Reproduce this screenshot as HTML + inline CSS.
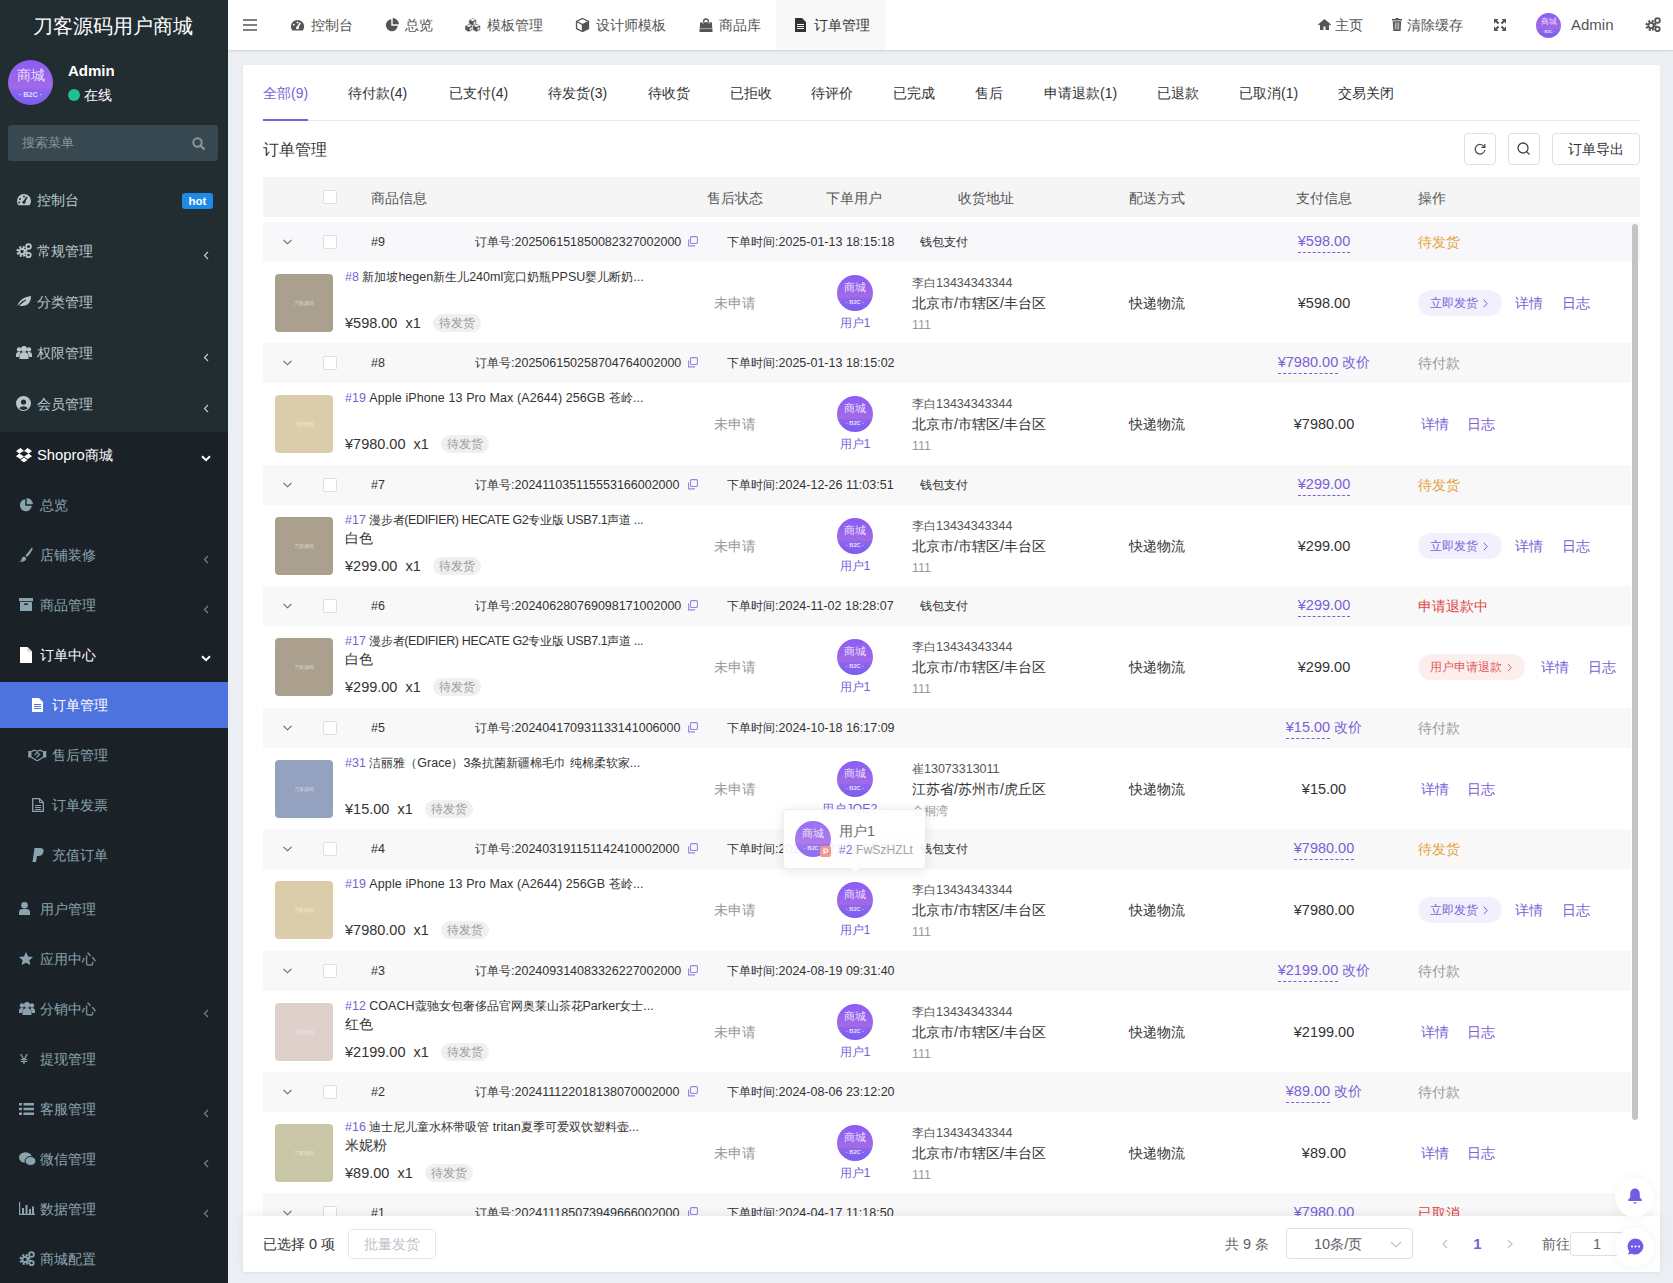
<!DOCTYPE html><html><head><meta charset="utf-8"><style>
*{margin:0;padding:0;box-sizing:border-box}
html,body{width:1673px;height:1283px;overflow:hidden;background:#ebeff4;font-family:"Liberation Sans", sans-serif}
.t{position:absolute;white-space:nowrap}
.b{position:absolute}
svg{position:absolute;overflow:visible}
</style></head><body>
<div class="b" style="left:0px;top:0px;width:228px;height:1283px;background:#222d32"></div>
<div class="b" style="left:0px;top:432px;width:228px;height:851px;background:#1b2227"></div>
<div class="t" style="left:-187px;width:600px;text-align:center;top:11.0px;font-size:20px;line-height:30px;color:#fff;font-weight:normal;">刀客源码用户商城</div>
<div class="b" style="left:8.0px;top:60.0px;width:45px;height:45px;border-radius:50%;background:linear-gradient(180deg,#8b5cf6 0%,#a36ae6 62%,#8f66ec 64%,#7c5cf0 100%);overflow:hidden"><div style="position:absolute;left:0;width:100%;top:8.1px;text-align:center;color:rgba(255,255,255,.8);font-size:13.5px;line-height:16.2px">商城</div><div style="position:absolute;left:0;width:100%;top:30.6px;text-align:center;color:rgba(255,255,255,.8);font-size:7.2px;line-height:8.64px;font-weight:bold">· B2C ·</div></div>
<div class="t" style="left:68px;top:61.0px;font-size:15px;line-height:20px;color:#fff;font-weight:bold;">Admin</div>
<div class="b" style="left:68px;top:89px;width:12px;height:12px;border-radius:50%;background:#1fbf8f"></div>
<div class="t" style="left:84px;top:85.0px;font-size:14px;line-height:20px;color:#fff;font-weight:normal;">在线</div>
<div class="b" style="left:8px;top:125px;width:210px;height:36px;background:#374850;border-radius:3px"></div>
<div class="t" style="left:22px;top:133.0px;font-size:13px;line-height:20px;color:#8a9499;font-weight:normal;">搜索菜单</div>
<svg style="left:192px;top:137px" width="13" height="13" viewBox="0 0 13 13"><circle cx="5.5" cy="5.5" r="4.2" fill="none" stroke="#8a9499" stroke-width="2"/><path d="M8.6 8.6L12 12" stroke="#8a9499" stroke-width="2.2" stroke-linecap="round"/></svg>
<svg style="left:16px;top:193px" width="16" height="13" viewBox="0 0 16 13"><path d="M8 1A7 7 0 0 0 1 8c0 1.6.5 3 1.4 4.2h11.2A7 7 0 0 0 15 8 7 7 0 0 0 8 1z" fill="#b8c7ce"/><path d="M8 9L11 4" stroke="#222d32" stroke-width="1.6"/><circle cx="8" cy="9.2" r="1.6" fill="#222d32"/><circle cx="4" cy="6" r="1" fill="#222d32"/><circle cx="8" cy="3.6" r="1" fill="#222d32"/><circle cx="3.2" cy="9.5" r="1" fill="#222d32"/></svg>
<div class="t" style="left:37px;top:190.0px;font-size:14px;line-height:20px;color:#b8c7ce;font-weight:normal;">控制台</div>
<svg style="left:16px;top:243px" width="16" height="15" viewBox="0 0 16 15"><circle cx="6" cy="8.5" r="4.3" fill="none" stroke="#b8c7ce" stroke-width="2.6" stroke-dasharray="2 1.4"/><circle cx="6" cy="8.5" r="2.6" fill="none" stroke="#b8c7ce" stroke-width="1.8"/><circle cx="12.5" cy="3.5" r="2.4" fill="none" stroke="#b8c7ce" stroke-width="1.8"/><circle cx="12.5" cy="12" r="2.2" fill="none" stroke="#b8c7ce" stroke-width="1.8"/></svg>
<div class="t" style="left:37px;top:241.0px;font-size:14px;line-height:20px;color:#b8c7ce;font-weight:normal;">常规管理</div>
<svg style="left:203px;top:251px" width="6" height="9" viewBox="0 0 6 9"><path d="M5 1L1.5 4.5L5 8" fill="none" stroke="#c0ccd2" stroke-width="1.2"/></svg>
<svg style="left:16px;top:295px" width="16" height="13" viewBox="0 0 16 13"><path d="M1 12C3 5 8 2 15 1c0 6-3 10-9 10-2 0-3-.5-4-1" fill="#b8c7ce"/><path d="M1.5 12C4 8 7 6 10 5" stroke="#222d32" stroke-width="1"/></svg>
<div class="t" style="left:37px;top:292.0px;font-size:14px;line-height:20px;color:#b8c7ce;font-weight:normal;">分类管理</div>
<svg style="left:16px;top:345px" width="16" height="14" viewBox="0 0 16 14"><circle cx="8" cy="4" r="3" fill="#b8c7ce"/><circle cx="3" cy="4.5" r="2.2" fill="#b8c7ce"/><circle cx="13" cy="4.5" r="2.2" fill="#b8c7ce"/><path d="M3.5 14v-3a4.5 4 0 0 1 9 0v3z" fill="#b8c7ce"/><path d="M0 12v-2a3 3 0 0 1 3-3h1.5L3 12z" fill="#b8c7ce"/><path d="M16 12v-2a3 3 0 0 0-3-3h-1.5L13 12z" fill="#b8c7ce"/></svg>
<div class="t" style="left:37px;top:343.0px;font-size:14px;line-height:20px;color:#b8c7ce;font-weight:normal;">权限管理</div>
<svg style="left:203px;top:353px" width="6" height="9" viewBox="0 0 6 9"><path d="M5 1L1.5 4.5L5 8" fill="none" stroke="#c0ccd2" stroke-width="1.2"/></svg>
<svg style="left:16px;top:396px" width="15" height="15" viewBox="0 0 15 15"><circle cx="7.5" cy="7.5" r="7.5" fill="#b8c7ce"/><circle cx="7.5" cy="6" r="2.6" fill="#222d32"/><path d="M3.2 12.2a5 4 0 0 1 8.6 0A6 6 0 0 1 3.2 12.2z" fill="#222d32"/></svg>
<div class="t" style="left:37px;top:394.0px;font-size:14px;line-height:20px;color:#b8c7ce;font-weight:normal;">会员管理</div>
<svg style="left:203px;top:404px" width="6" height="9" viewBox="0 0 6 9"><path d="M5 1L1.5 4.5L5 8" fill="none" stroke="#c0ccd2" stroke-width="1.2"/></svg>
<div class="b" style="left:182px;top:193px;width:31px;height:16px;background:#1e8ae6;border-radius:3px"></div>
<div class="t" style="left:-102.5px;width:600px;text-align:center;top:193.0px;font-size:11.5px;line-height:16px;color:#fff;font-weight:bold;">hot</div>
<svg style="left:16px;top:448px" width="16" height="14" viewBox="0 0 16 14"><path d="M4.5 0L0 3l3.3 2.6L8 3zM11.5 0L16 3l-3.3 2.6L8 3zM0 8.3L4.5 11.3 8 8.5 3.3 5.6zM16 8.3L11.5 11.3 8 8.5 12.7 5.6zM4.6 12.2L8 14.3l3.4-2.1L8 9.6z" fill="#fff"/></svg>
<div class="t" style="left:37px;top:445.0px;font-size:14.8px;line-height:20px;color:#fff;font-weight:normal;">Shopro<span style="font-size:14px">商城</span></div>
<svg style="left:201px;top:455px" width="10" height="7" viewBox="0 0 10 7"><path d="M1 1.2L5 5.2L9 1.2" fill="none" stroke="#fff" stroke-width="2"/></svg>
<svg style="left:19px;top:498px" width="14" height="14" viewBox="0 0 14 14"><path d="M6.3 1.2A6 6 0 1 0 12.8 7.7H6.3z" fill="#8aa4af"/><path d="M7.7 0v6.3H14A6.5 6.5 0 0 0 7.7 0z" fill="#8aa4af"/></svg>
<div class="t" style="left:40px;top:495.0px;font-size:14px;line-height:20px;color:#8aa4af;font-weight:normal;">总览</div>
<svg style="left:19px;top:547px" width="14" height="15" viewBox="0 0 14 15"><path d="M13 0.5C11 3 8 6.5 6.5 8.5l1.5 1.5C10 8 13.2 4 13.8 1.2z" fill="#8aa4af"/><path d="M5.5 9.5c-2 0-3 1.5-3 3 0 1-1 1.5-2.5 1.8C3 15.5 7.5 14.5 7 11z" fill="#8aa4af"/></svg>
<div class="t" style="left:40px;top:545.0px;font-size:14px;line-height:20px;color:#8aa4af;font-weight:normal;">店铺装修</div>
<svg style="left:203px;top:555px" width="6" height="9" viewBox="0 0 6 9"><path d="M5 1L1.5 4.5L5 8" fill="none" stroke="#6d8590" stroke-width="1.2"/></svg>
<svg style="left:19px;top:598px" width="14" height="13" viewBox="0 0 14 13"><rect x="0" y="0" width="14" height="3.2" fill="#8aa4af"/><path d="M1 4h12v9H1z" fill="#8aa4af"/><rect x="5" y="5.5" width="4" height="1.4" fill="#1a2226"/></svg>
<div class="t" style="left:40px;top:595.0px;font-size:14px;line-height:20px;color:#8aa4af;font-weight:normal;">商品管理</div>
<svg style="left:203px;top:605px" width="6" height="9" viewBox="0 0 6 9"><path d="M5 1L1.5 4.5L5 8" fill="none" stroke="#6d8590" stroke-width="1.2"/></svg>
<svg style="left:20px;top:647px" width="12" height="16" viewBox="0 0 12 16"><path d="M0 0h7.5L12 4.5V16H0z" fill="#fff"/><path d="M7.5 0v4.5H12" fill="#c9d3d8"/></svg>
<div class="t" style="left:40px;top:645.0px;font-size:14px;line-height:20px;color:#fff;font-weight:normal;">订单中心</div>
<svg style="left:201px;top:655px" width="10" height="7" viewBox="0 0 10 7"><path d="M1 1.2L5 5.2L9 1.2" fill="none" stroke="#fff" stroke-width="2"/></svg>
<div class="b" style="left:0px;top:682px;width:228px;height:46px;background:#4e73df"></div>
<svg style="left:32px;top:698px" width="11" height="14" viewBox="0 0 11 14"><path d="M0 0h7l4 4v10H0z" fill="#fff"/><path d="M2 6.5h7M2 8.5h7M2 10.5h7" stroke="#4e73df" stroke-width="1"/></svg>
<div class="t" style="left:52px;top:695.0px;font-size:14px;line-height:20px;color:#fff;font-weight:normal;">订单管理</div>
<svg style="left:28px;top:749px" width="18.5" height="12" viewBox="0 0 18 12"><rect x="0" y="2" width="2.6" height="6.5" fill="#8aa4af"/><rect x="15.4" y="2" width="2.6" height="6.5" fill="#8aa4af"/><path d="M2.6 3L6 1.2 9 2.2 12 1.2 15.4 3V8L10 11.3Q9 11.9 8 11.2L2.6 8z" fill="none" stroke="#8aa4af" stroke-width="1.2"/><path d="M6.3 6.2L9 3.4 11.8 6.2M8.2 8.6L10.6 6.2" fill="none" stroke="#8aa4af" stroke-width="1.2"/></svg>
<div class="t" style="left:52px;top:745.0px;font-size:14px;line-height:20px;color:#8aa4af;font-weight:normal;">售后管理</div>
<svg style="left:32px;top:798px" width="12" height="14" viewBox="0 0 12 14"><path d="M.7 .7H7.5L11.3 4.5V13.3H.7z" fill="none" stroke="#8aa4af" stroke-width="1.3"/><path d="M7.5 .7V4.5H11.3" fill="none" stroke="#8aa4af" stroke-width="1"/><path d="M3 7.5H9M3 9.5H9M3 11.5H9" stroke="#8aa4af" stroke-width="1"/></svg>
<div class="t" style="left:52px;top:795.0px;font-size:14px;line-height:20px;color:#8aa4af;font-weight:normal;">订单发票</div>
<svg style="left:32px;top:848px" width="12" height="14" viewBox="0 0 12 14"><path d="M2.5 0H8c2.5 0 4 1.3 3.5 3.8C11 7 9 8 6.5 8H5l-1 6H.5z" fill="#8aa4af"/></svg>
<div class="t" style="left:52px;top:845.0px;font-size:14px;line-height:20px;color:#8aa4af;font-weight:normal;">充值订单</div>
<svg style="left:19px;top:902px" width="11" height="13" viewBox="0 0 11 13"><circle cx="5.5" cy="3.3" r="3.3" fill="#8aa4af"/><path d="M0 13v-2.5A3.5 3.5 0 0 1 3.5 7h4A3.5 3.5 0 0 1 11 10.5V13z" fill="#8aa4af"/></svg>
<div class="t" style="left:40px;top:899.0px;font-size:14px;line-height:20px;color:#8aa4af;font-weight:normal;">用户管理</div>
<svg style="left:19px;top:952px" width="14" height="13" viewBox="0 0 14 13"><path d="M7 0l2.1 4.4 4.9.6-3.6 3.3.9 4.7L7 10.7 2.7 13l.9-4.7L0 5l4.9-.6z" fill="#8aa4af"/></svg>
<div class="t" style="left:40px;top:949.0px;font-size:14px;line-height:20px;color:#8aa4af;font-weight:normal;">应用中心</div>
<svg style="left:19px;top:1001px" width="16" height="14" viewBox="0 0 16 14"><circle cx="8" cy="4" r="3" fill="#8aa4af"/><circle cx="3" cy="4.5" r="2.2" fill="#8aa4af"/><circle cx="13" cy="4.5" r="2.2" fill="#8aa4af"/><path d="M3.5 14v-3a4.5 4 0 0 1 9 0v3z" fill="#8aa4af"/><path d="M0 12v-2a3 3 0 0 1 3-3h1.5L3 12z" fill="#8aa4af"/><path d="M16 12v-2a3 3 0 0 0-3-3h-1.5L13 12z" fill="#8aa4af"/></svg>
<div class="t" style="left:40px;top:999.0px;font-size:14px;line-height:20px;color:#8aa4af;font-weight:normal;">分销中心</div>
<svg style="left:203px;top:1009px" width="6" height="9" viewBox="0 0 6 9"><path d="M5 1L1.5 4.5L5 8" fill="none" stroke="#6d8590" stroke-width="1.2"/></svg>
<div class="t" style="left:20px;top:1050px;font-size:14px;line-height:18px;color:#8aa4af">¥</div>
<div class="t" style="left:40px;top:1049.0px;font-size:14px;line-height:20px;color:#8aa4af;font-weight:normal;">提现管理</div>
<svg style="left:19px;top:1103px" width="15" height="12" viewBox="0 0 15 12"><path d="M0 0h3v2.4H0zM4.5 0H15v2.4H4.5zM0 4.8h3v2.4H0zM4.5 4.8H15v2.4H4.5zM0 9.6h3V12H0zM4.5 9.6H15V12H4.5z" fill="#8aa4af"/></svg>
<div class="t" style="left:40px;top:1099.0px;font-size:14px;line-height:20px;color:#8aa4af;font-weight:normal;">客服管理</div>
<svg style="left:203px;top:1109px" width="6" height="9" viewBox="0 0 6 9"><path d="M5 1L1.5 4.5L5 8" fill="none" stroke="#6d8590" stroke-width="1.2"/></svg>
<svg style="left:19px;top:1152px" width="17" height="14" viewBox="0 0 17 14"><ellipse cx="6.5" cy="5.5" rx="6.5" ry="5.2" fill="#8aa4af"/><ellipse cx="11.5" cy="9" rx="5.5" ry="4.5" fill="#8aa4af" stroke="#1a2226" stroke-width="1"/></svg>
<div class="t" style="left:40px;top:1149.0px;font-size:14px;line-height:20px;color:#8aa4af;font-weight:normal;">微信管理</div>
<svg style="left:203px;top:1159px" width="6" height="9" viewBox="0 0 6 9"><path d="M5 1L1.5 4.5L5 8" fill="none" stroke="#6d8590" stroke-width="1.2"/></svg>
<svg style="left:19px;top:1202px" width="16" height="13" viewBox="0 0 16 13"><path d="M.6 0v12.4H16" fill="none" stroke="#8aa4af" stroke-width="1.2"/><path d="M3 6h2v6H3zM6.5 3h2v9h-2zM10 7h2v5h-2zM13 4.5h2V12h-2z" fill="#8aa4af"/></svg>
<div class="t" style="left:40px;top:1199.0px;font-size:14px;line-height:20px;color:#8aa4af;font-weight:normal;">数据管理</div>
<svg style="left:203px;top:1209px" width="6" height="9" viewBox="0 0 6 9"><path d="M5 1L1.5 4.5L5 8" fill="none" stroke="#6d8590" stroke-width="1.2"/></svg>
<svg style="left:19px;top:1251px" width="16" height="15" viewBox="0 0 16 15"><circle cx="6" cy="8.5" r="4.3" fill="none" stroke="#8aa4af" stroke-width="2.6" stroke-dasharray="2 1.4"/><circle cx="6" cy="8.5" r="2.6" fill="none" stroke="#8aa4af" stroke-width="1.8"/><circle cx="12.5" cy="3.5" r="2.4" fill="none" stroke="#8aa4af" stroke-width="1.8"/><circle cx="12.5" cy="12" r="2.2" fill="none" stroke="#8aa4af" stroke-width="1.8"/></svg>
<div class="t" style="left:40px;top:1249.0px;font-size:14px;line-height:20px;color:#8aa4af;font-weight:normal;">商城配置</div>
<div class="b" style="left:228px;top:0px;width:1445px;height:51px;background:#fff;border-bottom:1px solid #d6d9dd;box-shadow:0 1px 2px rgba(0,0,0,.05)"></div>
<svg style="left:243px;top:19px" width="14" height="12" viewBox="0 0 14 12"><path d="M0 1h14M0 6h14M0 11h14" stroke="#555" stroke-width="1.7"/></svg>
<div class="b" style="left:776px;top:0px;width:109px;height:50px;background:#f8f8f8"></div>
<svg style="left:290px;top:19px" width="15" height="12.2" viewBox="0 0 16 13"><path d="M8 1A7 7 0 0 0 1 8c0 1.6.5 3 1.4 4.2h11.2A7 7 0 0 0 15 8 7 7 0 0 0 8 1z" fill="#555"/><path d="M8 9L11 4" stroke="#fff" stroke-width="1.6"/><circle cx="8" cy="9.2" r="1.6" fill="#fff"/><circle cx="4" cy="6" r="1" fill="#fff"/><circle cx="8" cy="3.6" r="1" fill="#fff"/></svg>
<div class="t" style="left:311px;top:15.0px;font-size:14px;line-height:20px;color:#555;font-weight:normal;">控制台</div>
<svg style="left:385px;top:18px" width="14" height="14" viewBox="0 0 14 14"><path d="M6.3 1.2A6 6 0 1 0 12.8 7.7H6.3z" fill="#555"/><path d="M7.7 0v6.3H14A6.5 6.5 0 0 0 7.7 0z" fill="#555"/></svg>
<div class="t" style="left:405px;top:15.0px;font-size:14px;line-height:20px;color:#555;font-weight:normal;">总览</div>
<svg style="left:464px;top:18px" width="17.4" height="14" viewBox="0 0 17 14.5"><path d="M4.5 2L8.5 0L12.5 2V6.5L8.5 8.5L4.5 6.5z" fill="#555" stroke="#fff" stroke-width=".6"/><path d="M5.7 2L8.5 0.9L11.3 2L8.5 3.3z" fill="#fff"/><path d="M9.4 4.3L11.5 3.3V5.9L9.4 6.9z" fill="#fff" opacity=".85"/><path d="M0.5 8L4.5 6L8.5 8V12.5L4.5 14.5L0.5 12.5z" fill="#555" stroke="#fff" stroke-width=".6"/><path d="M1.7000000000000002 8L4.5 6.9L7.3 8L4.5 9.3z" fill="#fff"/><path d="M5.4 10.3L7.5 9.3V11.9L5.4 12.9z" fill="#fff" opacity=".85"/><path d="M8.5 8L12.5 6L16.5 8V12.5L12.5 14.5L8.5 12.5z" fill="#555" stroke="#fff" stroke-width=".6"/><path d="M9.7 8L12.5 6.9L15.3 8L12.5 9.3z" fill="#fff"/><path d="M13.4 10.3L15.5 9.3V11.9L13.4 12.9z" fill="#fff" opacity=".85"/></svg>
<div class="t" style="left:487px;top:15.0px;font-size:14px;line-height:20px;color:#555;font-weight:normal;">模板管理</div>
<svg style="left:576px;top:18px" width="13" height="14" viewBox="0 0 13 14"><path d="M6.5 .5L12.5 3.5v7L6.5 13.5.5 10.5v-7z" fill="none" stroke="#555" stroke-width="1.3"/><path d="M.5 3.5L6.5 6.5 12.5 3.5M6.5 6.5v7" fill="none" stroke="#555" stroke-width="1.3"/><path d="M6.5 6.5L12.5 3.5v7L6.5 13.5z" fill="#555"/></svg>
<div class="t" style="left:596px;top:15.0px;font-size:14px;line-height:20px;color:#555;font-weight:normal;">设计师模板</div>
<svg style="left:699px;top:18px" width="14" height="14" viewBox="0 0 14 14"><path d="M4.6 5.2V3.4a2.4 2.4 0 0 1 4.8 0v1.8" fill="none" stroke="#555" stroke-width="1.3"/><path d="M1.2 4.2h11.6l.8 9.8H.4z" fill="#555"/><path d="M4 4.2v1.3M10 4.2v1.3" stroke="#fff" stroke-width="1"/><path d="M.6 10.6h12.8" stroke="#fff" stroke-width=".8" opacity=".6"/></svg>
<div class="t" style="left:719px;top:15.0px;font-size:14px;line-height:20px;color:#555;font-weight:normal;">商品库</div>
<svg style="left:795px;top:18px" width="11" height="14" viewBox="0 0 11 14"><path d="M0 0h7l4 4v10H0z" fill="#333"/><path d="M2 6.5h7M2 8.5h7M2 10.5h7" stroke="#f6f6f6" stroke-width="1"/></svg>
<div class="t" style="left:814px;top:15.0px;font-size:14px;line-height:20px;color:#333;font-weight:normal;">订单管理</div>
<svg style="left:1318px;top:19px" width="13" height="11" viewBox="0 0 13 11"><path d="M6.5 0L0 5.6l.8.9 1.2-1V11h3.5V7.5h2V11H11V5.5l1.2 1 .8-.9z" fill="#555"/></svg>
<div class="t" style="left:1335px;top:15.0px;font-size:14px;line-height:20px;color:#555;font-weight:normal;">主页</div>
<svg style="left:1392px;top:18px" width="10" height="13" viewBox="0 0 10 13"><path d="M3.5 0h3v1H10v1.6H0V1h3.5z" fill="#555"/><path d="M.8 3.2h8.4L8.6 13H1.4z" fill="#555"/><path d="M3.3 4.5v7M5 4.5v7M6.7 4.5v7" stroke="#fff" stroke-width=".7"/></svg>
<div class="t" style="left:1407px;top:15.0px;font-size:14px;line-height:20px;color:#555;font-weight:normal;">清除缓存</div>
<svg style="left:1494px;top:19px" width="12" height="12" viewBox="0 0 12 12"><path d="M0 0h4.5L3 1.5 5.3 3.8 3.8 5.3 1.5 3 0 4.5zM12 0v4.5L10.5 3 8.2 5.3 6.7 3.8 9 1.5 7.5 0zM0 12V7.5L1.5 9l2.3-2.3 1.5 1.5L3 10.5 4.5 12zM12 12H7.5L9 10.5 6.7 8.2l1.5-1.5L10.5 9 12 7.5z" fill="#555"/></svg>
<div class="b" style="left:1536.0px;top:12.5px;width:25px;height:25px;border-radius:50%;background:linear-gradient(180deg,#8b5cf6 0%,#a36ae6 62%,#8f66ec 64%,#7c5cf0 100%);overflow:hidden"><div style="position:absolute;left:0;width:100%;top:4.5px;text-align:center;color:rgba(255,255,255,.8);font-size:7.5px;line-height:9.0px">商城</div><div style="position:absolute;left:0;width:100%;top:17.0px;text-align:center;color:rgba(255,255,255,.8);font-size:4.0px;line-height:4.8px;font-weight:bold">· B2C ·</div></div>
<div class="t" style="left:1571px;top:15.0px;font-size:15px;line-height:20px;color:#555;font-weight:normal;">Admin</div>
<svg style="left:1645px;top:17px" width="16" height="15" viewBox="0 0 16 15"><circle cx="6" cy="8.5" r="4.3" fill="none" stroke="#555" stroke-width="2.6" stroke-dasharray="2 1.4"/><circle cx="6" cy="8.5" r="2.6" fill="none" stroke="#555" stroke-width="1.8"/><circle cx="12.5" cy="3.5" r="2.4" fill="none" stroke="#555" stroke-width="1.8"/><circle cx="12.5" cy="12" r="2.2" fill="none" stroke="#555" stroke-width="1.8"/></svg>
<div class="b" style="left:243px;top:65px;width:1417px;height:1207px;background:#fff;border-radius:2px;box-shadow:0 1px 2px rgba(0,0,0,.04)"></div>
<div class="t" style="left:263px;top:83.0px;font-size:14px;line-height:20px;color:#7b5fd6;font-weight:normal;">全部(9)</div>
<div class="t" style="left:348px;top:83.0px;font-size:14px;line-height:20px;color:#333;font-weight:normal;">待付款(4)</div>
<div class="t" style="left:449px;top:83.0px;font-size:14px;line-height:20px;color:#333;font-weight:normal;">已支付(4)</div>
<div class="t" style="left:548px;top:83.0px;font-size:14px;line-height:20px;color:#333;font-weight:normal;">待发货(3)</div>
<div class="t" style="left:648px;top:83.0px;font-size:14px;line-height:20px;color:#333;font-weight:normal;">待收货</div>
<div class="t" style="left:730px;top:83.0px;font-size:14px;line-height:20px;color:#333;font-weight:normal;">已拒收</div>
<div class="t" style="left:811px;top:83.0px;font-size:14px;line-height:20px;color:#333;font-weight:normal;">待评价</div>
<div class="t" style="left:893px;top:83.0px;font-size:14px;line-height:20px;color:#333;font-weight:normal;">已完成</div>
<div class="t" style="left:975px;top:83.0px;font-size:14px;line-height:20px;color:#333;font-weight:normal;">售后</div>
<div class="t" style="left:1044px;top:83.0px;font-size:14px;line-height:20px;color:#333;font-weight:normal;">申请退款(1)</div>
<div class="t" style="left:1157px;top:83.0px;font-size:14px;line-height:20px;color:#333;font-weight:normal;">已退款</div>
<div class="t" style="left:1239px;top:83.0px;font-size:14px;line-height:20px;color:#333;font-weight:normal;">已取消(1)</div>
<div class="t" style="left:1338px;top:83.0px;font-size:14px;line-height:20px;color:#333;font-weight:normal;">交易关闭</div>
<div class="b" style="left:263px;top:119px;width:1377px;height:2px;background:#e8e8ec;height:1px;top:120px"></div>
<div class="b" style="left:263px;top:119px;width:45px;height:2px;background:#7b5fd6"></div>
<div class="t" style="left:263px;top:139.0px;font-size:16px;line-height:22px;color:#333;font-weight:normal;">订单管理</div>
<div class="b" style="left:1464px;top:133px;width:32px;height:32px;border:1px solid #dcdfe6;border-radius:4px;background:#fff"></div>
<div class="b" style="left:1508px;top:133px;width:32px;height:32px;border:1px solid #dcdfe6;border-radius:4px;background:#fff"></div>
<svg style="left:1474px;top:143px" width="12" height="12" viewBox="0 0 12 12"><path d="M10.3 4A4.8 4.8 0 1 0 10.8 7" fill="none" stroke="#444" stroke-width="1.2"/><path d="M10.8 1v3.4H7.4" fill="none" stroke="#444" stroke-width="1.2"/></svg>
<svg style="left:1517px;top:142px" width="14" height="14" viewBox="0 0 14 14"><circle cx="6" cy="6" r="5" fill="none" stroke="#444" stroke-width="1.3"/><path d="M9.6 9.6L12.5 12.5" stroke="#444" stroke-width="1.3"/></svg>
<div class="b" style="left:1552px;top:133px;width:88px;height:32px;border:1px solid #dcdfe6;border-radius:4px;background:#fff"></div>
<div class="t" style="left:1296px;width:600px;text-align:center;top:139.0px;font-size:14px;line-height:20px;color:#333;font-weight:normal;">订单导出</div>
<div class="b" style="left:263px;top:177px;width:1377px;height:40px;background:#f5f5f6"></div>
<div class="b" style="left:323px;top:190px;width:14px;height:14px;border:1px solid #dcdfe6;border-radius:2px;background:#fff"></div>
<div class="t" style="left:371px;top:188.0px;font-size:14px;line-height:20px;color:#555;font-weight:normal;">商品信息</div>
<div class="t" style="left:1418px;top:188.0px;font-size:14px;line-height:20px;color:#555;font-weight:normal;">操作</div>
<div class="t" style="left:435px;width:600px;text-align:center;top:188.0px;font-size:14px;line-height:20px;color:#555;font-weight:normal;">售后状态</div>
<div class="t" style="left:554px;width:600px;text-align:center;top:188.0px;font-size:14px;line-height:20px;color:#555;font-weight:normal;">下单用户</div>
<div class="t" style="left:686px;width:600px;text-align:center;top:188.0px;font-size:14px;line-height:20px;color:#555;font-weight:normal;">收货地址</div>
<div class="t" style="left:857px;width:600px;text-align:center;top:188.0px;font-size:14px;line-height:20px;color:#555;font-weight:normal;">配送方式</div>
<div class="t" style="left:1024px;width:600px;text-align:center;top:188.0px;font-size:14px;line-height:20px;color:#555;font-weight:normal;">支付信息</div>
<div style="position:absolute;left:0;top:0;width:1673px;height:1216px;overflow:hidden">
<div class="b" style="left:263px;top:222px;width:1377px;height:40px;background:#f8f7fa"></div>
<svg style="left:283px;top:239px" width="9" height="6" viewBox="0 0 9 6"><path d="M.5 .8L4.5 4.8 8.5 .8" fill="none" stroke="#666" stroke-width="1.1"/></svg>
<div class="b" style="left:323px;top:235px;width:14px;height:14px;border:1px solid #dcdfe6;border-radius:2px;background:#fff"></div>
<div class="t" style="left:371px;top:232.0px;font-size:12.5px;line-height:20px;color:#333;font-weight:normal;">#9</div>
<div class="t" style="left:475px;top:232.0px;font-size:12.5px;line-height:20px;color:#333;font-weight:normal;"><span style="font-size:12px">订单号</span>:202506151850082327002000</div>
<svg style="left:687px;top:236px" width="11" height="11" viewBox="0 0 11 11"><rect x="3.5" y=".6" width="6.9" height="6.9" rx="1" fill="none" stroke="#9b85e0" stroke-width="1.1"/><path d="M1.6 3.5v6.4h6.4" fill="none" stroke="#9b85e0" stroke-width="1.1"/></svg>
<div class="t" style="left:727px;top:232.0px;font-size:12.5px;line-height:20px;color:#333;font-weight:normal;"><span style="font-size:12px">下单时间</span>:2025-01-13 18:15:18</div>
<div class="t" style="left:920px;top:232.0px;font-size:12.5px;line-height:20px;color:#333;font-weight:normal;"><span style="font-size:12px">钱包支付</span></div>
<div class="t" style="left:1224px;width:200px;text-align:center;top:231px;font-size:14.5px;line-height:20px;color:#7b5fd6"><span style="border-bottom:1px dashed #7b5fd6;padding-bottom:3px">¥598.00</span></div>
<div class="t" style="left:1418px;top:232.0px;font-size:14px;line-height:20px;color:#e6a23c;font-weight:normal;">待发货</div>
<div class="b" style="left:275px;top:274px;width:58px;height:58px;background:#ab9f8d;border-radius:4px"></div>
<div class="t" style="left:4px;width:600px;text-align:center;top:299.0px;font-size:5px;line-height:8px;color:rgba(255,255,255,.6);font-weight:normal;">刀客源码</div>
<div class="t" style="left:345px;top:267px;font-size:12.5px;line-height:20px;color:#333"><span style="color:#7b5fd6">#8</span> <span style="letter-spacing:0px"><span style="font-size:12px">新加坡</span>hegen<span style="font-size:12px">新生儿</span>240ml<span style="font-size:12px">宽口奶瓶</span>PPSU<span style="font-size:12px">婴儿断奶</span>...</span></div>
<div class="t" id="pr9" style="left:345px;top:313px;font-size:14.5px;line-height:20px;color:#333">¥598.00&nbsp;&nbsp;x1<span style="display:inline-block;vertical-align:middle;margin-left:12px;margin-top:-3px;width:48px;height:18px;border-radius:9px;background:#f0f0f1;color:#999;font-size:12px;line-height:18px;text-align:center">待发货</span></div>
<div class="t" style="left:435px;width:600px;text-align:center;top:293.0px;font-size:14px;line-height:20px;color:#999;font-weight:normal;">未申请</div>
<div class="b" style="left:837.0px;top:275.0px;width:36px;height:36px;border-radius:50%;background:linear-gradient(180deg,#8b5cf6 0%,#a36ae6 62%,#8f66ec 64%,#7c5cf0 100%);overflow:hidden"><div style="position:absolute;left:0;width:100%;top:6.4799999999999995px;text-align:center;color:rgba(255,255,255,.8);font-size:10.799999999999999px;line-height:12.959999999999999px">商城</div><div style="position:absolute;left:0;width:100%;top:24.48px;text-align:center;color:rgba(255,255,255,.8);font-size:5.76px;line-height:6.912px;font-weight:bold">· B2C ·</div></div>
<div class="t" style="left:555px;width:600px;text-align:center;top:313.0px;font-size:12.5px;line-height:20px;color:#7b5fd6;font-weight:normal;"><span style="font-size:12px">用户</span>1</div>
<div class="t" style="left:912px;top:273.0px;font-size:12.5px;line-height:20px;color:#555;font-weight:normal;"><span style="font-size:12px">李白</span>13434343344</div>
<div class="t" style="left:912px;top:292.0px;font-size:14px;line-height:22px;color:#333;font-weight:normal;"><span style="font-size:14.3px">北京市</span><b style="font-weight:normal;padding:0">/</b><span style="font-size:14.3px">市辖区</span><b style="font-weight:normal;padding:0">/</b><span style="font-size:14.3px">丰台区</span></div>
<div class="t" style="left:912px;top:314.5px;font-size:12.5px;line-height:20px;color:#999;font-weight:normal;">111</div>
<div class="t" style="left:857px;width:600px;text-align:center;top:293.0px;font-size:14px;line-height:20px;color:#333;font-weight:normal;">快递物流</div>
<div class="t" style="left:1024px;width:600px;text-align:center;top:293.0px;font-size:14.5px;line-height:20px;color:#333;font-weight:normal;">¥598.00</div>
<div class="b" style="left:1418px;top:290px;width:84px;height:26px;background:#f3f0fd;border-radius:13px"></div>
<div class="t" style="left:1430px;top:293.0px;font-size:12px;line-height:20px;color:#7b5fd6;font-weight:normal;">立即发货</div>
<svg style="left:1483px;top:299px" width="5" height="9" viewBox="0 0 5 9"><path d="M.8 .8L4.2 4.5.8 8.2" fill="none" stroke="#7b5fd6" stroke-width="1"/></svg>
<div class="t" style="left:1515px;top:293.0px;font-size:14px;line-height:20px;color:#7b5fd6;font-weight:normal;">详情</div>
<div class="t" style="left:1562px;top:293.0px;font-size:14px;line-height:20px;color:#7b5fd6;font-weight:normal;">日志</div>
<div class="b" style="left:263px;top:343px;width:1368px;height:40px;background:#f8f8f9"></div>
<svg style="left:283px;top:360px" width="9" height="6" viewBox="0 0 9 6"><path d="M.5 .8L4.5 4.8 8.5 .8" fill="none" stroke="#666" stroke-width="1.1"/></svg>
<div class="b" style="left:323px;top:356px;width:14px;height:14px;border:1px solid #dcdfe6;border-radius:2px;background:#fff"></div>
<div class="t" style="left:371px;top:353.0px;font-size:12.5px;line-height:20px;color:#333;font-weight:normal;">#8</div>
<div class="t" style="left:475px;top:353.0px;font-size:12.5px;line-height:20px;color:#333;font-weight:normal;"><span style="font-size:12px">订单号</span>:202506150258704764002000</div>
<svg style="left:687px;top:357px" width="11" height="11" viewBox="0 0 11 11"><rect x="3.5" y=".6" width="6.9" height="6.9" rx="1" fill="none" stroke="#9b85e0" stroke-width="1.1"/><path d="M1.6 3.5v6.4h6.4" fill="none" stroke="#9b85e0" stroke-width="1.1"/></svg>
<div class="t" style="left:727px;top:353.0px;font-size:12.5px;line-height:20px;color:#333;font-weight:normal;"><span style="font-size:12px">下单时间</span>:2025-01-13 18:15:02</div>
<div class="t" style="left:1224px;width:200px;text-align:center;top:352px;font-size:14.5px;line-height:20px;color:#7b5fd6"><span style="border-bottom:1px dashed #7b5fd6;padding-bottom:3px">¥7980.00</span> <span style="font-size:14px">改价</span></div>
<div class="t" style="left:1418px;top:353.0px;font-size:14px;line-height:20px;color:#999;font-weight:normal;">待付款</div>
<div class="b" style="left:275px;top:395px;width:58px;height:58px;background:#dccdaa;border-radius:4px"></div>
<div class="t" style="left:4px;width:600px;text-align:center;top:420.0px;font-size:5px;line-height:8px;color:rgba(255,255,255,.6);font-weight:normal;">刀客源码</div>
<div class="t" style="left:345px;top:388px;font-size:12.5px;line-height:20px;color:#333"><span style="color:#7b5fd6">#19</span> <span style="letter-spacing:0.1px">Apple iPhone 13 Pro Max (A2644) 256GB <span style="font-size:12px">苍岭</span>...</span></div>
<div class="t" id="pr8" style="left:345px;top:434px;font-size:14.5px;line-height:20px;color:#333">¥7980.00&nbsp;&nbsp;x1<span style="display:inline-block;vertical-align:middle;margin-left:12px;margin-top:-3px;width:48px;height:18px;border-radius:9px;background:#f0f0f1;color:#999;font-size:12px;line-height:18px;text-align:center">待发货</span></div>
<div class="t" style="left:435px;width:600px;text-align:center;top:414.0px;font-size:14px;line-height:20px;color:#999;font-weight:normal;">未申请</div>
<div class="b" style="left:837.0px;top:396.0px;width:36px;height:36px;border-radius:50%;background:linear-gradient(180deg,#8b5cf6 0%,#a36ae6 62%,#8f66ec 64%,#7c5cf0 100%);overflow:hidden"><div style="position:absolute;left:0;width:100%;top:6.4799999999999995px;text-align:center;color:rgba(255,255,255,.8);font-size:10.799999999999999px;line-height:12.959999999999999px">商城</div><div style="position:absolute;left:0;width:100%;top:24.48px;text-align:center;color:rgba(255,255,255,.8);font-size:5.76px;line-height:6.912px;font-weight:bold">· B2C ·</div></div>
<div class="t" style="left:555px;width:600px;text-align:center;top:434.0px;font-size:12.5px;line-height:20px;color:#7b5fd6;font-weight:normal;"><span style="font-size:12px">用户</span>1</div>
<div class="t" style="left:912px;top:394.0px;font-size:12.5px;line-height:20px;color:#555;font-weight:normal;"><span style="font-size:12px">李白</span>13434343344</div>
<div class="t" style="left:912px;top:413.0px;font-size:14px;line-height:22px;color:#333;font-weight:normal;"><span style="font-size:14.3px">北京市</span><b style="font-weight:normal;padding:0">/</b><span style="font-size:14.3px">市辖区</span><b style="font-weight:normal;padding:0">/</b><span style="font-size:14.3px">丰台区</span></div>
<div class="t" style="left:912px;top:435.5px;font-size:12.5px;line-height:20px;color:#999;font-weight:normal;">111</div>
<div class="t" style="left:857px;width:600px;text-align:center;top:414.0px;font-size:14px;line-height:20px;color:#333;font-weight:normal;">快递物流</div>
<div class="t" style="left:1024px;width:600px;text-align:center;top:414.0px;font-size:14.5px;line-height:20px;color:#333;font-weight:normal;">¥7980.00</div>
<div class="t" style="left:1421px;top:414.0px;font-size:14px;line-height:20px;color:#7b5fd6;font-weight:normal;">详情</div>
<div class="t" style="left:1467px;top:414.0px;font-size:14px;line-height:20px;color:#7b5fd6;font-weight:normal;">日志</div>
<div class="b" style="left:263px;top:465px;width:1368px;height:40px;background:#f8f8f9"></div>
<svg style="left:283px;top:482px" width="9" height="6" viewBox="0 0 9 6"><path d="M.5 .8L4.5 4.8 8.5 .8" fill="none" stroke="#666" stroke-width="1.1"/></svg>
<div class="b" style="left:323px;top:478px;width:14px;height:14px;border:1px solid #dcdfe6;border-radius:2px;background:#fff"></div>
<div class="t" style="left:371px;top:475.0px;font-size:12.5px;line-height:20px;color:#333;font-weight:normal;">#7</div>
<div class="t" style="left:475px;top:475.0px;font-size:12.5px;line-height:20px;color:#333;font-weight:normal;"><span style="font-size:12px">订单号</span>:202411035115553166002000</div>
<svg style="left:687px;top:479px" width="11" height="11" viewBox="0 0 11 11"><rect x="3.5" y=".6" width="6.9" height="6.9" rx="1" fill="none" stroke="#9b85e0" stroke-width="1.1"/><path d="M1.6 3.5v6.4h6.4" fill="none" stroke="#9b85e0" stroke-width="1.1"/></svg>
<div class="t" style="left:727px;top:475.0px;font-size:12.5px;line-height:20px;color:#333;font-weight:normal;"><span style="font-size:12px">下单时间</span>:2024-12-26 11:03:51</div>
<div class="t" style="left:920px;top:475.0px;font-size:12.5px;line-height:20px;color:#333;font-weight:normal;"><span style="font-size:12px">钱包支付</span></div>
<div class="t" style="left:1224px;width:200px;text-align:center;top:474px;font-size:14.5px;line-height:20px;color:#7b5fd6"><span style="border-bottom:1px dashed #7b5fd6;padding-bottom:3px">¥299.00</span></div>
<div class="t" style="left:1418px;top:475.0px;font-size:14px;line-height:20px;color:#e6a23c;font-weight:normal;">待发货</div>
<div class="b" style="left:275px;top:517px;width:58px;height:58px;background:#ab9f8d;border-radius:4px"></div>
<div class="t" style="left:4px;width:600px;text-align:center;top:542.0px;font-size:5px;line-height:8px;color:rgba(255,255,255,.6);font-weight:normal;">刀客源码</div>
<div class="t" style="left:345px;top:510px;font-size:12.5px;line-height:20px;color:#333"><span style="color:#7b5fd6">#17</span> <span style="letter-spacing:-0.36px"><span style="font-size:12px">漫步者</span>(EDIFIER) HECATE G2<span style="font-size:12px">专业版</span> USB7.1<span style="font-size:12px">声道</span> ...</span></div>
<div class="t" style="left:345px;top:528.0px;font-size:14px;line-height:20px;color:#333;font-weight:normal;"><span style="font-size:14px">白色</span></div>
<div class="t" id="pr7" style="left:345px;top:556px;font-size:14.5px;line-height:20px;color:#333">¥299.00&nbsp;&nbsp;x1<span style="display:inline-block;vertical-align:middle;margin-left:12px;margin-top:-3px;width:48px;height:18px;border-radius:9px;background:#f0f0f1;color:#999;font-size:12px;line-height:18px;text-align:center">待发货</span></div>
<div class="t" style="left:435px;width:600px;text-align:center;top:536.0px;font-size:14px;line-height:20px;color:#999;font-weight:normal;">未申请</div>
<div class="b" style="left:837.0px;top:518.0px;width:36px;height:36px;border-radius:50%;background:linear-gradient(180deg,#8b5cf6 0%,#a36ae6 62%,#8f66ec 64%,#7c5cf0 100%);overflow:hidden"><div style="position:absolute;left:0;width:100%;top:6.4799999999999995px;text-align:center;color:rgba(255,255,255,.8);font-size:10.799999999999999px;line-height:12.959999999999999px">商城</div><div style="position:absolute;left:0;width:100%;top:24.48px;text-align:center;color:rgba(255,255,255,.8);font-size:5.76px;line-height:6.912px;font-weight:bold">· B2C ·</div></div>
<div class="t" style="left:555px;width:600px;text-align:center;top:556.0px;font-size:12.5px;line-height:20px;color:#7b5fd6;font-weight:normal;"><span style="font-size:12px">用户</span>1</div>
<div class="t" style="left:912px;top:516.0px;font-size:12.5px;line-height:20px;color:#555;font-weight:normal;"><span style="font-size:12px">李白</span>13434343344</div>
<div class="t" style="left:912px;top:535.0px;font-size:14px;line-height:22px;color:#333;font-weight:normal;"><span style="font-size:14.3px">北京市</span><b style="font-weight:normal;padding:0">/</b><span style="font-size:14.3px">市辖区</span><b style="font-weight:normal;padding:0">/</b><span style="font-size:14.3px">丰台区</span></div>
<div class="t" style="left:912px;top:557.5px;font-size:12.5px;line-height:20px;color:#999;font-weight:normal;">111</div>
<div class="t" style="left:857px;width:600px;text-align:center;top:536.0px;font-size:14px;line-height:20px;color:#333;font-weight:normal;">快递物流</div>
<div class="t" style="left:1024px;width:600px;text-align:center;top:536.0px;font-size:14.5px;line-height:20px;color:#333;font-weight:normal;">¥299.00</div>
<div class="b" style="left:1418px;top:533px;width:84px;height:26px;background:#f3f0fd;border-radius:13px"></div>
<div class="t" style="left:1430px;top:536.0px;font-size:12px;line-height:20px;color:#7b5fd6;font-weight:normal;">立即发货</div>
<svg style="left:1483px;top:542px" width="5" height="9" viewBox="0 0 5 9"><path d="M.8 .8L4.2 4.5.8 8.2" fill="none" stroke="#7b5fd6" stroke-width="1"/></svg>
<div class="t" style="left:1515px;top:536.0px;font-size:14px;line-height:20px;color:#7b5fd6;font-weight:normal;">详情</div>
<div class="t" style="left:1562px;top:536.0px;font-size:14px;line-height:20px;color:#7b5fd6;font-weight:normal;">日志</div>
<div class="b" style="left:263px;top:586px;width:1368px;height:40px;background:#f8f8f9"></div>
<svg style="left:283px;top:603px" width="9" height="6" viewBox="0 0 9 6"><path d="M.5 .8L4.5 4.8 8.5 .8" fill="none" stroke="#666" stroke-width="1.1"/></svg>
<div class="b" style="left:323px;top:599px;width:14px;height:14px;border:1px solid #dcdfe6;border-radius:2px;background:#fff"></div>
<div class="t" style="left:371px;top:596.0px;font-size:12.5px;line-height:20px;color:#333;font-weight:normal;">#6</div>
<div class="t" style="left:475px;top:596.0px;font-size:12.5px;line-height:20px;color:#333;font-weight:normal;"><span style="font-size:12px">订单号</span>:202406280769098171002000</div>
<svg style="left:687px;top:600px" width="11" height="11" viewBox="0 0 11 11"><rect x="3.5" y=".6" width="6.9" height="6.9" rx="1" fill="none" stroke="#9b85e0" stroke-width="1.1"/><path d="M1.6 3.5v6.4h6.4" fill="none" stroke="#9b85e0" stroke-width="1.1"/></svg>
<div class="t" style="left:727px;top:596.0px;font-size:12.5px;line-height:20px;color:#333;font-weight:normal;"><span style="font-size:12px">下单时间</span>:2024-11-02 18:28:07</div>
<div class="t" style="left:920px;top:596.0px;font-size:12.5px;line-height:20px;color:#333;font-weight:normal;"><span style="font-size:12px">钱包支付</span></div>
<div class="t" style="left:1224px;width:200px;text-align:center;top:595px;font-size:14.5px;line-height:20px;color:#7b5fd6"><span style="border-bottom:1px dashed #7b5fd6;padding-bottom:3px">¥299.00</span></div>
<div class="t" style="left:1418px;top:596.0px;font-size:14px;line-height:20px;color:#e04444;font-weight:normal;">申请退款中</div>
<div class="b" style="left:275px;top:638px;width:58px;height:58px;background:#ab9f8d;border-radius:4px"></div>
<div class="t" style="left:4px;width:600px;text-align:center;top:663.0px;font-size:5px;line-height:8px;color:rgba(255,255,255,.6);font-weight:normal;">刀客源码</div>
<div class="t" style="left:345px;top:631px;font-size:12.5px;line-height:20px;color:#333"><span style="color:#7b5fd6">#17</span> <span style="letter-spacing:-0.36px"><span style="font-size:12px">漫步者</span>(EDIFIER) HECATE G2<span style="font-size:12px">专业版</span> USB7.1<span style="font-size:12px">声道</span> ...</span></div>
<div class="t" style="left:345px;top:649.0px;font-size:14px;line-height:20px;color:#333;font-weight:normal;"><span style="font-size:14px">白色</span></div>
<div class="t" id="pr6" style="left:345px;top:677px;font-size:14.5px;line-height:20px;color:#333">¥299.00&nbsp;&nbsp;x1<span style="display:inline-block;vertical-align:middle;margin-left:12px;margin-top:-3px;width:48px;height:18px;border-radius:9px;background:#f0f0f1;color:#999;font-size:12px;line-height:18px;text-align:center">待发货</span></div>
<div class="t" style="left:435px;width:600px;text-align:center;top:657.0px;font-size:14px;line-height:20px;color:#999;font-weight:normal;">未申请</div>
<div class="b" style="left:837.0px;top:639.0px;width:36px;height:36px;border-radius:50%;background:linear-gradient(180deg,#8b5cf6 0%,#a36ae6 62%,#8f66ec 64%,#7c5cf0 100%);overflow:hidden"><div style="position:absolute;left:0;width:100%;top:6.4799999999999995px;text-align:center;color:rgba(255,255,255,.8);font-size:10.799999999999999px;line-height:12.959999999999999px">商城</div><div style="position:absolute;left:0;width:100%;top:24.48px;text-align:center;color:rgba(255,255,255,.8);font-size:5.76px;line-height:6.912px;font-weight:bold">· B2C ·</div></div>
<div class="t" style="left:555px;width:600px;text-align:center;top:677.0px;font-size:12.5px;line-height:20px;color:#7b5fd6;font-weight:normal;"><span style="font-size:12px">用户</span>1</div>
<div class="t" style="left:912px;top:637.0px;font-size:12.5px;line-height:20px;color:#555;font-weight:normal;"><span style="font-size:12px">李白</span>13434343344</div>
<div class="t" style="left:912px;top:656.0px;font-size:14px;line-height:22px;color:#333;font-weight:normal;"><span style="font-size:14.3px">北京市</span><b style="font-weight:normal;padding:0">/</b><span style="font-size:14.3px">市辖区</span><b style="font-weight:normal;padding:0">/</b><span style="font-size:14.3px">丰台区</span></div>
<div class="t" style="left:912px;top:678.5px;font-size:12.5px;line-height:20px;color:#999;font-weight:normal;">111</div>
<div class="t" style="left:857px;width:600px;text-align:center;top:657.0px;font-size:14px;line-height:20px;color:#333;font-weight:normal;">快递物流</div>
<div class="t" style="left:1024px;width:600px;text-align:center;top:657.0px;font-size:14.5px;line-height:20px;color:#333;font-weight:normal;">¥299.00</div>
<div class="b" style="left:1418px;top:654px;width:107px;height:26px;background:#fdeeee;border-radius:13px"></div>
<div class="t" style="left:1430px;top:657.0px;font-size:12px;line-height:20px;color:#e25c5c;font-weight:normal;">用户申请退款</div>
<svg style="left:1507px;top:663px" width="5" height="9" viewBox="0 0 5 9"><path d="M.8 .8L4.2 4.5.8 8.2" fill="none" stroke="#e25c5c" stroke-width="1"/></svg>
<div class="t" style="left:1541px;top:657.0px;font-size:14px;line-height:20px;color:#7b5fd6;font-weight:normal;">详情</div>
<div class="t" style="left:1588px;top:657.0px;font-size:14px;line-height:20px;color:#7b5fd6;font-weight:normal;">日志</div>
<div class="b" style="left:263px;top:708px;width:1368px;height:40px;background:#f8f8f9"></div>
<svg style="left:283px;top:725px" width="9" height="6" viewBox="0 0 9 6"><path d="M.5 .8L4.5 4.8 8.5 .8" fill="none" stroke="#666" stroke-width="1.1"/></svg>
<div class="b" style="left:323px;top:721px;width:14px;height:14px;border:1px solid #dcdfe6;border-radius:2px;background:#fff"></div>
<div class="t" style="left:371px;top:718.0px;font-size:12.5px;line-height:20px;color:#333;font-weight:normal;">#5</div>
<div class="t" style="left:475px;top:718.0px;font-size:12.5px;line-height:20px;color:#333;font-weight:normal;"><span style="font-size:12px">订单号</span>:202404170931133141006000</div>
<svg style="left:687px;top:722px" width="11" height="11" viewBox="0 0 11 11"><rect x="3.5" y=".6" width="6.9" height="6.9" rx="1" fill="none" stroke="#9b85e0" stroke-width="1.1"/><path d="M1.6 3.5v6.4h6.4" fill="none" stroke="#9b85e0" stroke-width="1.1"/></svg>
<div class="t" style="left:727px;top:718.0px;font-size:12.5px;line-height:20px;color:#333;font-weight:normal;"><span style="font-size:12px">下单时间</span>:2024-10-18 16:17:09</div>
<div class="t" style="left:1224px;width:200px;text-align:center;top:717px;font-size:14.5px;line-height:20px;color:#7b5fd6"><span style="border-bottom:1px dashed #7b5fd6;padding-bottom:3px">¥15.00</span> <span style="font-size:14px">改价</span></div>
<div class="t" style="left:1418px;top:718.0px;font-size:14px;line-height:20px;color:#999;font-weight:normal;">待付款</div>
<div class="b" style="left:275px;top:760px;width:58px;height:58px;background:#94a2bf;border-radius:4px"></div>
<div class="t" style="left:4px;width:600px;text-align:center;top:785.0px;font-size:5px;line-height:8px;color:rgba(255,255,255,.6);font-weight:normal;">刀客源码</div>
<div class="t" style="left:345px;top:753px;font-size:12.5px;line-height:20px;color:#333"><span style="color:#7b5fd6">#31</span> <span style="letter-spacing:0px"><span style="font-size:12px">洁丽雅（</span>Grace<span style="font-size:12px">）</span>3<span style="font-size:12px">条抗菌新疆棉毛巾</span> <span style="font-size:12px">纯棉柔软家</span>...</span></div>
<div class="t" id="pr5" style="left:345px;top:799px;font-size:14.5px;line-height:20px;color:#333">¥15.00&nbsp;&nbsp;x1<span style="display:inline-block;vertical-align:middle;margin-left:12px;margin-top:-3px;width:48px;height:18px;border-radius:9px;background:#f0f0f1;color:#999;font-size:12px;line-height:18px;text-align:center">待发货</span></div>
<div class="t" style="left:435px;width:600px;text-align:center;top:779.0px;font-size:14px;line-height:20px;color:#999;font-weight:normal;">未申请</div>
<div class="b" style="left:837.0px;top:761.0px;width:36px;height:36px;border-radius:50%;background:linear-gradient(180deg,#8b5cf6 0%,#a36ae6 62%,#8f66ec 64%,#7c5cf0 100%);overflow:hidden"><div style="position:absolute;left:0;width:100%;top:6.4799999999999995px;text-align:center;color:rgba(255,255,255,.8);font-size:10.799999999999999px;line-height:12.959999999999999px">商城</div><div style="position:absolute;left:0;width:100%;top:24.48px;text-align:center;color:rgba(255,255,255,.8);font-size:5.76px;line-height:6.912px;font-weight:bold">· B2C ·</div></div>
<div class="t" style="left:555px;width:600px;text-align:center;top:799.0px;font-size:12.5px;line-height:20px;color:#7b5fd6;font-weight:normal;"><span style="font-size:12px">用户</span>JQE2...</div>
<div class="t" style="left:912px;top:759.0px;font-size:12.5px;line-height:20px;color:#555;font-weight:normal;"><span style="font-size:12px">崔</span>13073313011</div>
<div class="t" style="left:912px;top:778.0px;font-size:14px;line-height:22px;color:#333;font-weight:normal;"><span style="font-size:14.3px">江苏省</span><b style="font-weight:normal;padding:0">/</b><span style="font-size:14.3px">苏州市</span><b style="font-weight:normal;padding:0">/</b><span style="font-size:14.3px">虎丘区</span></div>
<div class="t" style="left:912px;top:800.5px;font-size:12.5px;line-height:20px;color:#999;font-weight:normal;"><span style="font-size:12px">金桐湾</span></div>
<div class="t" style="left:857px;width:600px;text-align:center;top:779.0px;font-size:14px;line-height:20px;color:#333;font-weight:normal;">快递物流</div>
<div class="t" style="left:1024px;width:600px;text-align:center;top:779.0px;font-size:14.5px;line-height:20px;color:#333;font-weight:normal;">¥15.00</div>
<div class="t" style="left:1421px;top:779.0px;font-size:14px;line-height:20px;color:#7b5fd6;font-weight:normal;">详情</div>
<div class="t" style="left:1467px;top:779.0px;font-size:14px;line-height:20px;color:#7b5fd6;font-weight:normal;">日志</div>
<div class="b" style="left:263px;top:829px;width:1368px;height:40px;background:#f8f8f9"></div>
<svg style="left:283px;top:846px" width="9" height="6" viewBox="0 0 9 6"><path d="M.5 .8L4.5 4.8 8.5 .8" fill="none" stroke="#666" stroke-width="1.1"/></svg>
<div class="b" style="left:323px;top:842px;width:14px;height:14px;border:1px solid #dcdfe6;border-radius:2px;background:#fff"></div>
<div class="t" style="left:371px;top:839.0px;font-size:12.5px;line-height:20px;color:#333;font-weight:normal;">#4</div>
<div class="t" style="left:475px;top:839.0px;font-size:12.5px;line-height:20px;color:#333;font-weight:normal;"><span style="font-size:12px">订单号</span>:202403191151142410002000</div>
<svg style="left:687px;top:843px" width="11" height="11" viewBox="0 0 11 11"><rect x="3.5" y=".6" width="6.9" height="6.9" rx="1" fill="none" stroke="#9b85e0" stroke-width="1.1"/><path d="M1.6 3.5v6.4h6.4" fill="none" stroke="#9b85e0" stroke-width="1.1"/></svg>
<div class="t" style="left:727px;top:839.0px;font-size:12.5px;line-height:20px;color:#333;font-weight:normal;"><span style="font-size:12px">下单时间</span>:2024-09-21 10:22:37</div>
<div class="t" style="left:920px;top:839.0px;font-size:12.5px;line-height:20px;color:#333;font-weight:normal;"><span style="font-size:12px">钱包支付</span></div>
<div class="t" style="left:1224px;width:200px;text-align:center;top:838px;font-size:14.5px;line-height:20px;color:#7b5fd6"><span style="border-bottom:1px dashed #7b5fd6;padding-bottom:3px">¥7980.00</span></div>
<div class="t" style="left:1418px;top:839.0px;font-size:14px;line-height:20px;color:#e6a23c;font-weight:normal;">待发货</div>
<div class="b" style="left:275px;top:881px;width:58px;height:58px;background:#dccdaa;border-radius:4px"></div>
<div class="t" style="left:4px;width:600px;text-align:center;top:906.0px;font-size:5px;line-height:8px;color:rgba(255,255,255,.6);font-weight:normal;">刀客源码</div>
<div class="t" style="left:345px;top:874px;font-size:12.5px;line-height:20px;color:#333"><span style="color:#7b5fd6">#19</span> <span style="letter-spacing:0.1px">Apple iPhone 13 Pro Max (A2644) 256GB <span style="font-size:12px">苍岭</span>...</span></div>
<div class="t" id="pr4" style="left:345px;top:920px;font-size:14.5px;line-height:20px;color:#333">¥7980.00&nbsp;&nbsp;x1<span style="display:inline-block;vertical-align:middle;margin-left:12px;margin-top:-3px;width:48px;height:18px;border-radius:9px;background:#f0f0f1;color:#999;font-size:12px;line-height:18px;text-align:center">待发货</span></div>
<div class="t" style="left:435px;width:600px;text-align:center;top:900.0px;font-size:14px;line-height:20px;color:#999;font-weight:normal;">未申请</div>
<div class="b" style="left:837.0px;top:882.0px;width:36px;height:36px;border-radius:50%;background:linear-gradient(180deg,#8b5cf6 0%,#a36ae6 62%,#8f66ec 64%,#7c5cf0 100%);overflow:hidden"><div style="position:absolute;left:0;width:100%;top:6.4799999999999995px;text-align:center;color:rgba(255,255,255,.8);font-size:10.799999999999999px;line-height:12.959999999999999px">商城</div><div style="position:absolute;left:0;width:100%;top:24.48px;text-align:center;color:rgba(255,255,255,.8);font-size:5.76px;line-height:6.912px;font-weight:bold">· B2C ·</div></div>
<div class="t" style="left:555px;width:600px;text-align:center;top:920.0px;font-size:12.5px;line-height:20px;color:#7b5fd6;font-weight:normal;"><span style="font-size:12px">用户</span>1</div>
<div class="t" style="left:912px;top:880.0px;font-size:12.5px;line-height:20px;color:#555;font-weight:normal;"><span style="font-size:12px">李白</span>13434343344</div>
<div class="t" style="left:912px;top:899.0px;font-size:14px;line-height:22px;color:#333;font-weight:normal;"><span style="font-size:14.3px">北京市</span><b style="font-weight:normal;padding:0">/</b><span style="font-size:14.3px">市辖区</span><b style="font-weight:normal;padding:0">/</b><span style="font-size:14.3px">丰台区</span></div>
<div class="t" style="left:912px;top:921.5px;font-size:12.5px;line-height:20px;color:#999;font-weight:normal;">111</div>
<div class="t" style="left:857px;width:600px;text-align:center;top:900.0px;font-size:14px;line-height:20px;color:#333;font-weight:normal;">快递物流</div>
<div class="t" style="left:1024px;width:600px;text-align:center;top:900.0px;font-size:14.5px;line-height:20px;color:#333;font-weight:normal;">¥7980.00</div>
<div class="b" style="left:1418px;top:897px;width:84px;height:26px;background:#f3f0fd;border-radius:13px"></div>
<div class="t" style="left:1430px;top:900.0px;font-size:12px;line-height:20px;color:#7b5fd6;font-weight:normal;">立即发货</div>
<svg style="left:1483px;top:906px" width="5" height="9" viewBox="0 0 5 9"><path d="M.8 .8L4.2 4.5.8 8.2" fill="none" stroke="#7b5fd6" stroke-width="1"/></svg>
<div class="t" style="left:1515px;top:900.0px;font-size:14px;line-height:20px;color:#7b5fd6;font-weight:normal;">详情</div>
<div class="t" style="left:1562px;top:900.0px;font-size:14px;line-height:20px;color:#7b5fd6;font-weight:normal;">日志</div>
<div class="b" style="left:263px;top:951px;width:1368px;height:40px;background:#f8f8f9"></div>
<svg style="left:283px;top:968px" width="9" height="6" viewBox="0 0 9 6"><path d="M.5 .8L4.5 4.8 8.5 .8" fill="none" stroke="#666" stroke-width="1.1"/></svg>
<div class="b" style="left:323px;top:964px;width:14px;height:14px;border:1px solid #dcdfe6;border-radius:2px;background:#fff"></div>
<div class="t" style="left:371px;top:961.0px;font-size:12.5px;line-height:20px;color:#333;font-weight:normal;">#3</div>
<div class="t" style="left:475px;top:961.0px;font-size:12.5px;line-height:20px;color:#333;font-weight:normal;"><span style="font-size:12px">订单号</span>:202409314083326227002000</div>
<svg style="left:687px;top:965px" width="11" height="11" viewBox="0 0 11 11"><rect x="3.5" y=".6" width="6.9" height="6.9" rx="1" fill="none" stroke="#9b85e0" stroke-width="1.1"/><path d="M1.6 3.5v6.4h6.4" fill="none" stroke="#9b85e0" stroke-width="1.1"/></svg>
<div class="t" style="left:727px;top:961.0px;font-size:12.5px;line-height:20px;color:#333;font-weight:normal;"><span style="font-size:12px">下单时间</span>:2024-08-19 09:31:40</div>
<div class="t" style="left:1224px;width:200px;text-align:center;top:960px;font-size:14.5px;line-height:20px;color:#7b5fd6"><span style="border-bottom:1px dashed #7b5fd6;padding-bottom:3px">¥2199.00</span> <span style="font-size:14px">改价</span></div>
<div class="t" style="left:1418px;top:961.0px;font-size:14px;line-height:20px;color:#999;font-weight:normal;">待付款</div>
<div class="b" style="left:275px;top:1003px;width:58px;height:58px;background:#dfd0cb;border-radius:4px"></div>
<div class="t" style="left:4px;width:600px;text-align:center;top:1028.0px;font-size:5px;line-height:8px;color:rgba(255,255,255,.6);font-weight:normal;">刀客源码</div>
<div class="t" style="left:345px;top:996px;font-size:12.5px;line-height:20px;color:#333"><span style="color:#7b5fd6">#12</span> <span style="letter-spacing:0px">COACH<span style="font-size:12px">蔻驰女包奢侈品官网奥莱山茶花</span>Parker<span style="font-size:12px">女士</span>...</span></div>
<div class="t" style="left:345px;top:1014.0px;font-size:14px;line-height:20px;color:#333;font-weight:normal;"><span style="font-size:14px">红色</span></div>
<div class="t" id="pr3" style="left:345px;top:1042px;font-size:14.5px;line-height:20px;color:#333">¥2199.00&nbsp;&nbsp;x1<span style="display:inline-block;vertical-align:middle;margin-left:12px;margin-top:-3px;width:48px;height:18px;border-radius:9px;background:#f0f0f1;color:#999;font-size:12px;line-height:18px;text-align:center">待发货</span></div>
<div class="t" style="left:435px;width:600px;text-align:center;top:1022.0px;font-size:14px;line-height:20px;color:#999;font-weight:normal;">未申请</div>
<div class="b" style="left:837.0px;top:1004.0px;width:36px;height:36px;border-radius:50%;background:linear-gradient(180deg,#8b5cf6 0%,#a36ae6 62%,#8f66ec 64%,#7c5cf0 100%);overflow:hidden"><div style="position:absolute;left:0;width:100%;top:6.4799999999999995px;text-align:center;color:rgba(255,255,255,.8);font-size:10.799999999999999px;line-height:12.959999999999999px">商城</div><div style="position:absolute;left:0;width:100%;top:24.48px;text-align:center;color:rgba(255,255,255,.8);font-size:5.76px;line-height:6.912px;font-weight:bold">· B2C ·</div></div>
<div class="t" style="left:555px;width:600px;text-align:center;top:1042.0px;font-size:12.5px;line-height:20px;color:#7b5fd6;font-weight:normal;"><span style="font-size:12px">用户</span>1</div>
<div class="t" style="left:912px;top:1002.0px;font-size:12.5px;line-height:20px;color:#555;font-weight:normal;"><span style="font-size:12px">李白</span>13434343344</div>
<div class="t" style="left:912px;top:1021.0px;font-size:14px;line-height:22px;color:#333;font-weight:normal;"><span style="font-size:14.3px">北京市</span><b style="font-weight:normal;padding:0">/</b><span style="font-size:14.3px">市辖区</span><b style="font-weight:normal;padding:0">/</b><span style="font-size:14.3px">丰台区</span></div>
<div class="t" style="left:912px;top:1043.5px;font-size:12.5px;line-height:20px;color:#999;font-weight:normal;">111</div>
<div class="t" style="left:857px;width:600px;text-align:center;top:1022.0px;font-size:14px;line-height:20px;color:#333;font-weight:normal;">快递物流</div>
<div class="t" style="left:1024px;width:600px;text-align:center;top:1022.0px;font-size:14.5px;line-height:20px;color:#333;font-weight:normal;">¥2199.00</div>
<div class="t" style="left:1421px;top:1022.0px;font-size:14px;line-height:20px;color:#7b5fd6;font-weight:normal;">详情</div>
<div class="t" style="left:1467px;top:1022.0px;font-size:14px;line-height:20px;color:#7b5fd6;font-weight:normal;">日志</div>
<div class="b" style="left:263px;top:1072px;width:1368px;height:40px;background:#f8f8f9"></div>
<svg style="left:283px;top:1089px" width="9" height="6" viewBox="0 0 9 6"><path d="M.5 .8L4.5 4.8 8.5 .8" fill="none" stroke="#666" stroke-width="1.1"/></svg>
<div class="b" style="left:323px;top:1085px;width:14px;height:14px;border:1px solid #dcdfe6;border-radius:2px;background:#fff"></div>
<div class="t" style="left:371px;top:1082.0px;font-size:12.5px;line-height:20px;color:#333;font-weight:normal;">#2</div>
<div class="t" style="left:475px;top:1082.0px;font-size:12.5px;line-height:20px;color:#333;font-weight:normal;"><span style="font-size:12px">订单号</span>:202411122018138070002000</div>
<svg style="left:687px;top:1086px" width="11" height="11" viewBox="0 0 11 11"><rect x="3.5" y=".6" width="6.9" height="6.9" rx="1" fill="none" stroke="#9b85e0" stroke-width="1.1"/><path d="M1.6 3.5v6.4h6.4" fill="none" stroke="#9b85e0" stroke-width="1.1"/></svg>
<div class="t" style="left:727px;top:1082.0px;font-size:12.5px;line-height:20px;color:#333;font-weight:normal;"><span style="font-size:12px">下单时间</span>:2024-08-06 23:12:20</div>
<div class="t" style="left:1224px;width:200px;text-align:center;top:1081px;font-size:14.5px;line-height:20px;color:#7b5fd6"><span style="border-bottom:1px dashed #7b5fd6;padding-bottom:3px">¥89.00</span> <span style="font-size:14px">改价</span></div>
<div class="t" style="left:1418px;top:1082.0px;font-size:14px;line-height:20px;color:#999;font-weight:normal;">待付款</div>
<div class="b" style="left:275px;top:1124px;width:58px;height:58px;background:#c9c6a8;border-radius:4px"></div>
<div class="t" style="left:4px;width:600px;text-align:center;top:1149.0px;font-size:5px;line-height:8px;color:rgba(255,255,255,.6);font-weight:normal;">刀客源码</div>
<div class="t" style="left:345px;top:1117px;font-size:12.5px;line-height:20px;color:#333"><span style="color:#7b5fd6">#16</span> <span style="letter-spacing:0px"><span style="font-size:12px">迪士尼儿童水杯带吸管</span> tritan<span style="font-size:12px">夏季可爱双饮塑料壶</span>...</span></div>
<div class="t" style="left:345px;top:1135.0px;font-size:14px;line-height:20px;color:#333;font-weight:normal;"><span style="font-size:14px">米妮粉</span></div>
<div class="t" id="pr2" style="left:345px;top:1163px;font-size:14.5px;line-height:20px;color:#333">¥89.00&nbsp;&nbsp;x1<span style="display:inline-block;vertical-align:middle;margin-left:12px;margin-top:-3px;width:48px;height:18px;border-radius:9px;background:#f0f0f1;color:#999;font-size:12px;line-height:18px;text-align:center">待发货</span></div>
<div class="t" style="left:435px;width:600px;text-align:center;top:1143.0px;font-size:14px;line-height:20px;color:#999;font-weight:normal;">未申请</div>
<div class="b" style="left:837.0px;top:1125.0px;width:36px;height:36px;border-radius:50%;background:linear-gradient(180deg,#8b5cf6 0%,#a36ae6 62%,#8f66ec 64%,#7c5cf0 100%);overflow:hidden"><div style="position:absolute;left:0;width:100%;top:6.4799999999999995px;text-align:center;color:rgba(255,255,255,.8);font-size:10.799999999999999px;line-height:12.959999999999999px">商城</div><div style="position:absolute;left:0;width:100%;top:24.48px;text-align:center;color:rgba(255,255,255,.8);font-size:5.76px;line-height:6.912px;font-weight:bold">· B2C ·</div></div>
<div class="t" style="left:555px;width:600px;text-align:center;top:1163.0px;font-size:12.5px;line-height:20px;color:#7b5fd6;font-weight:normal;"><span style="font-size:12px">用户</span>1</div>
<div class="t" style="left:912px;top:1123.0px;font-size:12.5px;line-height:20px;color:#555;font-weight:normal;"><span style="font-size:12px">李白</span>13434343344</div>
<div class="t" style="left:912px;top:1142.0px;font-size:14px;line-height:22px;color:#333;font-weight:normal;"><span style="font-size:14.3px">北京市</span><b style="font-weight:normal;padding:0">/</b><span style="font-size:14.3px">市辖区</span><b style="font-weight:normal;padding:0">/</b><span style="font-size:14.3px">丰台区</span></div>
<div class="t" style="left:912px;top:1164.5px;font-size:12.5px;line-height:20px;color:#999;font-weight:normal;">111</div>
<div class="t" style="left:857px;width:600px;text-align:center;top:1143.0px;font-size:14px;line-height:20px;color:#333;font-weight:normal;">快递物流</div>
<div class="t" style="left:1024px;width:600px;text-align:center;top:1143.0px;font-size:14.5px;line-height:20px;color:#333;font-weight:normal;">¥89.00</div>
<div class="t" style="left:1421px;top:1143.0px;font-size:14px;line-height:20px;color:#7b5fd6;font-weight:normal;">详情</div>
<div class="t" style="left:1467px;top:1143.0px;font-size:14px;line-height:20px;color:#7b5fd6;font-weight:normal;">日志</div>
<div class="b" style="left:263px;top:1193px;width:1368px;height:40px;background:#f8f8f9"></div>
<svg style="left:283px;top:1210px" width="9" height="6" viewBox="0 0 9 6"><path d="M.5 .8L4.5 4.8 8.5 .8" fill="none" stroke="#666" stroke-width="1.1"/></svg>
<div class="b" style="left:323px;top:1206px;width:14px;height:14px;border:1px solid #dcdfe6;border-radius:2px;background:#fff"></div>
<div class="t" style="left:371px;top:1203.0px;font-size:12.5px;line-height:20px;color:#333;font-weight:normal;">#1</div>
<div class="t" style="left:475px;top:1203.0px;font-size:12.5px;line-height:20px;color:#333;font-weight:normal;"><span style="font-size:12px">订单号</span>:202411185073949666002000</div>
<svg style="left:687px;top:1207px" width="11" height="11" viewBox="0 0 11 11"><rect x="3.5" y=".6" width="6.9" height="6.9" rx="1" fill="none" stroke="#9b85e0" stroke-width="1.1"/><path d="M1.6 3.5v6.4h6.4" fill="none" stroke="#9b85e0" stroke-width="1.1"/></svg>
<div class="t" style="left:727px;top:1203.0px;font-size:12.5px;line-height:20px;color:#333;font-weight:normal;"><span style="font-size:12px">下单时间</span>:2024-04-17 11:18:50</div>
<div class="t" style="left:1224px;width:200px;text-align:center;top:1202px;font-size:14.5px;line-height:20px;color:#7b5fd6"><span style="border-bottom:1px dashed #7b5fd6;padding-bottom:3px">¥7980.00</span></div>
<div class="t" style="left:1418px;top:1203.0px;font-size:14px;line-height:20px;color:#e04444;font-weight:normal;">已取消</div>
<div class="b" style="left:275px;top:1245px;width:58px;height:58px;background:#dccdaa;border-radius:4px"></div>
<div class="t" style="left:4px;width:600px;text-align:center;top:1270.0px;font-size:5px;line-height:8px;color:rgba(255,255,255,.6);font-weight:normal;">刀客源码</div>
<div class="t" style="left:345px;top:1238px;font-size:12.5px;line-height:20px;color:#333"><span style="color:#7b5fd6">#19</span> <span style="letter-spacing:0.1px">Apple iPhone 13 Pro Max (A2644) 256GB <span style="font-size:12px">苍岭</span>...</span></div>
<div class="t" id="pr1" style="left:345px;top:1284px;font-size:14.5px;line-height:20px;color:#333">¥7980.00&nbsp;&nbsp;x1<span style="display:inline-block;vertical-align:middle;margin-left:12px;margin-top:-3px;width:48px;height:18px;border-radius:9px;background:#f0f0f1;color:#999;font-size:12px;line-height:18px;text-align:center">待发货</span></div>
<div class="t" style="left:435px;width:600px;text-align:center;top:1264.0px;font-size:14px;line-height:20px;color:#999;font-weight:normal;">未申请</div>
<div class="b" style="left:837.0px;top:1246.0px;width:36px;height:36px;border-radius:50%;background:linear-gradient(180deg,#8b5cf6 0%,#a36ae6 62%,#8f66ec 64%,#7c5cf0 100%);overflow:hidden"><div style="position:absolute;left:0;width:100%;top:6.4799999999999995px;text-align:center;color:rgba(255,255,255,.8);font-size:10.799999999999999px;line-height:12.959999999999999px">商城</div><div style="position:absolute;left:0;width:100%;top:24.48px;text-align:center;color:rgba(255,255,255,.8);font-size:5.76px;line-height:6.912px;font-weight:bold">· B2C ·</div></div>
<div class="t" style="left:555px;width:600px;text-align:center;top:1284.0px;font-size:12.5px;line-height:20px;color:#7b5fd6;font-weight:normal;"><span style="font-size:12px">用户</span>1</div>
<div class="t" style="left:912px;top:1244.0px;font-size:12.5px;line-height:20px;color:#555;font-weight:normal;"><span style="font-size:12px">李白</span>13434343344</div>
<div class="t" style="left:912px;top:1263.0px;font-size:14px;line-height:22px;color:#333;font-weight:normal;"><span style="font-size:14.3px">北京市</span><b style="font-weight:normal;padding:0">/</b><span style="font-size:14.3px">市辖区</span><b style="font-weight:normal;padding:0">/</b><span style="font-size:14.3px">丰台区</span></div>
<div class="t" style="left:912px;top:1285.5px;font-size:12.5px;line-height:20px;color:#999;font-weight:normal;">111</div>
<div class="t" style="left:857px;width:600px;text-align:center;top:1264.0px;font-size:14px;line-height:20px;color:#333;font-weight:normal;">快递物流</div>
<div class="t" style="left:1024px;width:600px;text-align:center;top:1264.0px;font-size:14.5px;line-height:20px;color:#333;font-weight:normal;">¥7980.00</div>
<div class="t" style="left:1421px;top:1264.0px;font-size:14px;line-height:20px;color:#7b5fd6;font-weight:normal;">详情</div>
<div class="t" style="left:1467px;top:1264.0px;font-size:14px;line-height:20px;color:#7b5fd6;font-weight:normal;">日志</div>
</div>
<div class="b" style="left:1632px;top:224px;width:6px;height:896px;background:#c4c4c6;border-radius:3px"></div>
<div class="b" style="left:783px;top:809px;width:143px;height:60px;background:#fff;border:1px solid #ebeef5;border-radius:4px;box-shadow:0 2px 12px rgba(0,0,0,.1);opacity:.92">
</div>
<div class="b" style="left:849px;top:868px;width:12px;height:6px;overflow:hidden;opacity:.86"><div style="position:absolute;left:1px;top:-6px;width:10px;height:10px;background:#fff;transform:rotate(45deg);border:1px solid #ebeef5"></div></div>
<div class="b" style="left:0;top:0;width:1673px;height:1283px;opacity:.88">
<div class="b" style="left:795.0px;top:820.5px;width:36px;height:36px;border-radius:50%;background:linear-gradient(180deg,#8b5cf6 0%,#a36ae6 62%,#8f66ec 64%,#7c5cf0 100%);overflow:hidden"><div style="position:absolute;left:0;width:100%;top:6.4799999999999995px;text-align:center;color:rgba(255,255,255,.8);font-size:10.799999999999999px;line-height:12.959999999999999px">商城</div><div style="position:absolute;left:0;width:100%;top:24.48px;text-align:center;color:rgba(255,255,255,.8);font-size:5.76px;line-height:6.912px;font-weight:bold">· B2C ·</div></div>
<div class="b" style="left:820px;top:846px;width:11px;height:11px;background:#f08b80;border-radius:2px"></div>
<svg style="left:822px;top:848px" width="7" height="7" viewBox="0 0 7 7"><path d="M2 6V1h2.2a1.6 1.6 0 0 1 0 3.2H2" fill="none" stroke="#fff" stroke-width="1.2"/></svg>
<div class="t" style="left:839px;top:821.0px;font-size:14.5px;line-height:20px;color:#555;font-weight:normal;"><span style="font-size:14px">用户</span>1</div>
<div class="t" style="left:839px;top:840.0px;font-size:12.2px;line-height:20px;color:#999;font-weight:normal;"><span style="color:#7b5fd6">#2</span> FwSzHZLt</div>
</div>
<div class="b" style="left:243px;top:1216px;width:1417px;height:56px;background:#fff;border-radius:0 0 4px 4px;box-shadow:0 -3px 8px rgba(0,0,0,.06)"></div>
<div class="t" style="left:263px;top:1234.0px;font-size:14.5px;line-height:20px;color:#333;font-weight:normal;"><span style="font-size:14px">已选择</span> 0 <span style="font-size:14px">项</span></div>
<div class="b" style="left:348px;top:1229px;width:88px;height:30px;border:1px solid #e4e7ed;border-radius:4px;background:#fff"></div>
<div class="t" style="left:92px;width:600px;text-align:center;top:1234.0px;font-size:14px;line-height:20px;color:#c0c4cc;font-weight:normal;">批量发货</div>
<div class="t" style="left:1225px;top:1234.0px;font-size:14.5px;line-height:20px;color:#606266;font-weight:normal;"><span style="font-size:14px">共</span> 9 <span style="font-size:14px">条</span></div>
<div class="b" style="left:1286px;top:1228px;width:127px;height:31px;border:1px solid #dcdfe6;border-radius:4px;background:#fff"></div>
<div class="t" style="left:1314px;top:1234.0px;font-size:14.5px;line-height:20px;color:#606266;font-weight:normal;">10<span style="font-size:14px">条</span>/<span style="font-size:14px">页</span></div>
<svg style="left:1390px;top:1241px" width="12" height="7" viewBox="0 0 12 7"><path d="M1 1l5 5 5-5" fill="none" stroke="#c0c4cc" stroke-width="1.2"/></svg>
<svg style="left:1442px;top:1239px" width="6" height="10" viewBox="0 0 6 10"><path d="M5 1L1 5l4 4" fill="none" stroke="#c0c4cc" stroke-width="1.2"/></svg>
<div class="t" style="left:1177.5px;width:600px;text-align:center;top:1234.0px;font-size:15px;line-height:20px;color:#7b5fd6;font-weight:bold;">1</div>
<svg style="left:1507px;top:1239px" width="6" height="10" viewBox="0 0 6 10"><path d="M1 1l4 4-4 4" fill="none" stroke="#c0c4cc" stroke-width="1.2"/></svg>
<div class="t" style="left:1542px;top:1234.0px;font-size:14px;line-height:20px;color:#606266;font-weight:normal;">前往</div>
<div class="b" style="left:1570px;top:1232px;width:60px;height:24px;border:1px solid #dcdfe6;border-radius:3px;background:#fff"></div>
<div class="t" style="left:1297px;width:600px;text-align:center;top:1234.0px;font-size:14.5px;line-height:20px;color:#606266;font-weight:normal;">1</div>
<div class="b" style="left:1615px;top:1177.5px;width:39px;height:39px;border-radius:50%;background:#fff;box-shadow:0 0 12px rgba(0,0,0,.05)"></div>
<div class="b" style="left:1615px;top:1227.5px;width:39px;height:39px;border-radius:50%;background:#fff;box-shadow:0 0 12px rgba(0,0,0,.05)"></div>
<svg style="left:1628px;top:1188px" width="14" height="17" viewBox="0 0 14 17"><path d="M7 0.5C3.8.5 2.2 3 2.2 6v3.5L.3 11.6c-.4.5-.1 1.4.6 1.4h12.2c.7 0 1-.9.6-1.4L11.8 9.5V6C11.8 3 10.2.5 7 .5z" fill="#6f5de6"/><path d="M5 14.3h4L7 16z" fill="#6f5de6"/></svg>
<svg style="left:1627px;top:1238px" width="17" height="17" viewBox="0 0 17 17"><path d="M8.5.5a8 8 0 1 1-3.6 15.2L1 16.6l1.2-3.3A8 8 0 0 1 8.5.5z" fill="#6f5de6"/><circle cx="5" cy="8.5" r="1.1" fill="#fff"/><circle cx="8.5" cy="8.5" r="1.1" fill="#fff"/><circle cx="12" cy="8.5" r="1.1" fill="#fff"/></svg>
</body></html>
